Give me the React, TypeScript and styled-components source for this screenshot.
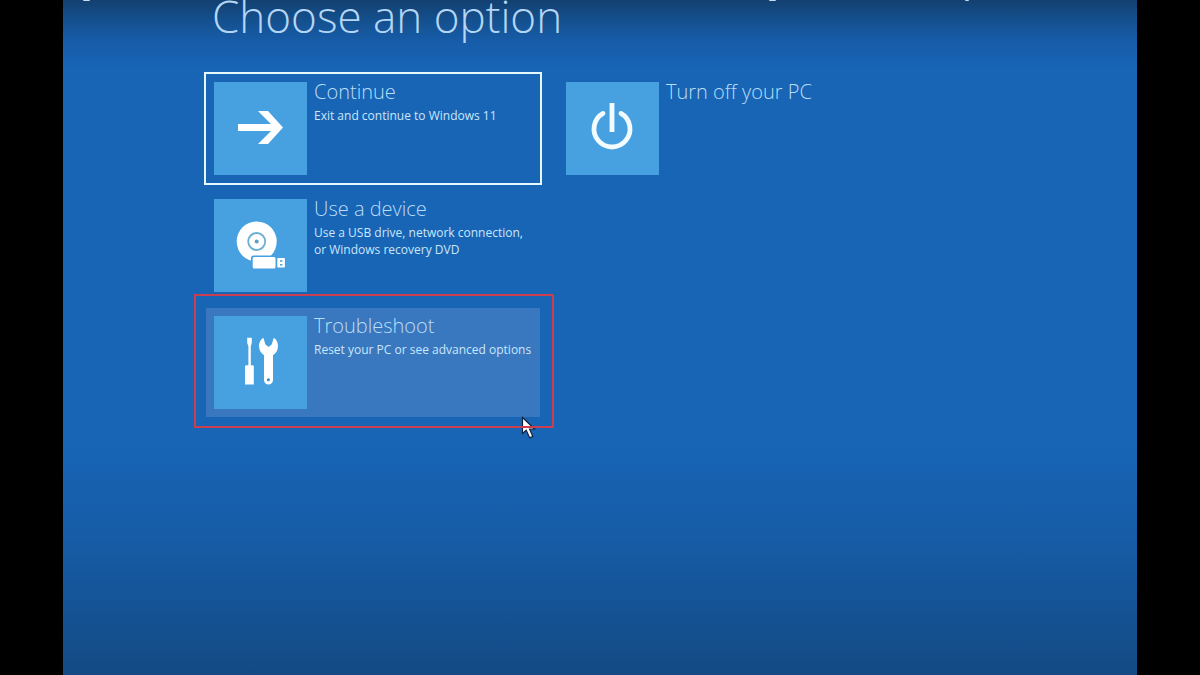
import React from "react";
import styled, { createGlobalStyle } from "styled-components";

const GlobalStyle = createGlobalStyle`
  * { box-sizing: border-box; }
  body {
    margin: 0;
    background: #000;
    font-family: "Open Sans", "Noto Sans", sans-serif;
  }
`;

const Screen = styled.main`
  position: relative;
  min-height: 100vh;
  margin: 0 63px;
  padding: 0 141px;
  overflow: hidden;
  background: linear-gradient(
    #134070 0%,
    #14508e 3%,
    #175ca8 6%,
    #1864b5 10%,
    #1864b5 66%,
    #165ca6 80%,
    #134a84 100%
  );
`;

const Caption = styled.div`
  position: absolute;
  top: 0;
  left: 20px;
  display: flex;
`;

const Descender = styled.span<{ $after: number; $width: number }>`
  width: ${(p) => p.$width}px;
  height: 1px;
  margin-right: ${(p) => p.$after}px;
  border-radius: 0 0 2px 2px;
  background: #c3dcf3;
`;

const Heading = styled.h1`
  margin: 0 0 40px;
  padding-left: 8px;
  color: #b4d6f5;
  font-size: 44px;
  font-weight: 300;
  line-height: 32px;
`;

const Options = styled.div`
  display: grid;
  grid-template-columns: repeat(2, 338px);
  gap: 4px 14px;
`;

const Cell = styled.div<{ $column?: number }>`
  position: relative;
  grid-column: ${(p) => p.$column ?? 1};
`;

const Tile = styled.button<{ $state?: "focused" | "hovered" }>`
  display: flex;
  align-items: flex-start;
  gap: 7px;
  width: 100%;
  padding: 8px;
  border: 2px solid ${(p) => (p.$state === "focused" ? "#e6f8ff" : "transparent")};
  background: ${(p) => (p.$state === "hovered" ? "#3977bf" : "transparent")};
  background-clip: padding-box;
  color: #b9def8;
  font-family: inherit;
  text-align: left;
  outline: none;
`;

const IconBox = styled.svg`
  flex: none;
  width: 93px;
  height: 93px;
  background: #47a1e1;
`;

const Label = styled.span`
  display: flex;
  flex-direction: column;
  white-space: nowrap;
`;

const Title = styled.span`
  font-size: 20px;
  font-weight: 300;
  line-height: 20px;
`;

const Description = styled.span`
  margin-top: 5px;
  color: #cbe7fb;
  font-size: 12px;
  line-height: 17px;
`;

const Highlight = styled.div`
  position: absolute;
  inset: -12px -12px -9px -10px;
  border: 2px solid #cb3e50;
  pointer-events: none;
`;

const Pointer = styled.svg`
  position: absolute;
  left: 317px;
  top: 110px;
  width: 16px;
  height: 24px;
  pointer-events: none;
`;

const ArrowIcon = () => (
  <IconBox viewBox="0 0 93 93" aria-hidden="true">
    <path d="M24 42H57L44 29H54L69 45.5L54 62H44L57 49H24Z" fill="#fff" />
  </IconBox>
);

const PowerIcon = () => (
  <IconBox viewBox="0 0 93 93" aria-hidden="true">
    <g fill="none" stroke="#f2fcff" strokeWidth="4.8">
      <path d="M46 21V50" />
      <path d="M37 31.4A18 18 0 1 0 55 31.4" strokeLinecap="round" />
    </g>
  </IconBox>
);

const DeviceIcon = () => (
  <IconBox viewBox="0 0 93 93" aria-hidden="true">
    <circle cx="42.7" cy="42.5" r="20" fill="#fff" />
    <circle cx="42.7" cy="42.5" r="8.5" fill="none" stroke="#6baed4" strokeWidth="1.8" />
    <circle cx="42.7" cy="42.5" r="2" fill="#5a9fc8" />
    <rect x="37" y="56.4" width="26" height="15" rx="2.5" fill="#47a1e1" />
    <rect x="38.7" y="58" width="22.8" height="11.4" rx="1.5" fill="#fff" />
    <rect x="63.3" y="59" width="7.6" height="9.6" rx="0.8" fill="#fff" />
    <path d="M66 61.2h2.4v1.6H66zM66 65h2.4v1.6H66z" fill="#47a1e1" />
  </IconBox>
);

const ToolsIcon = () => (
  <IconBox viewBox="0 0 93 93" aria-hidden="true">
    <path
      d="M33.2 21.7H37.8V27L36.8 30.2V49.3H38.6Q39.8 49.3 39.8 50.5V68.5H31V50.5Q31 49.3 32.2 49.3H34.4V30.2L33.2 27Z"
      fill="#fff"
    />
    <path
      d="M49.4 21.8C46.5 23.4 45 26.5 45 30C45 34.4 47.2 37.3 50 39.2V64A4.5 4.5 0 0 0 59 64V39.2C62 37.3 64 34.4 64 30C64 26.5 62.5 23.4 59.8 21.8L57.7 28.4L54.6 31L51.4 28.4Z"
      fill="#fff"
    />
    <circle cx="54.4" cy="63.7" r="1.5" fill="#3f86b8" />
  </IconBox>
);

export default function App() {
  return (
    <>
      <GlobalStyle />
      <Screen>
        <Caption aria-hidden="true">
          <Descender $width={7} $after={679} />
          <Descender $width={7} $after={189} />
          <Descender $width={4} $after={0} />
        </Caption>
        <Heading>Choose an option</Heading>
        <Options>
          <Cell>
            <Tile type="button" $state="focused">
              <ArrowIcon />
              <Label>
                <Title>Continue</Title>
                <Description>Exit and continue to Windows 11</Description>
              </Label>
            </Tile>
          </Cell>
          <Cell $column={2}>
            <Tile type="button">
              <PowerIcon />
              <Label>
                <Title>Turn off your PC</Title>
              </Label>
            </Tile>
          </Cell>
          <Cell>
            <Tile type="button">
              <DeviceIcon />
              <Label>
                <Title>Use a device</Title>
                <Description>
                  Use a USB drive, network connection,
                  <br />
                  or Windows recovery DVD
                </Description>
              </Label>
            </Tile>
          </Cell>
          <Cell>
            <Tile type="button" $state="hovered">
              <ToolsIcon />
              <Label>
                <Title>Troubleshoot</Title>
                <Description>Reset your PC or see advanced options</Description>
              </Label>
            </Tile>
            <Pointer viewBox="0 0 16 24" aria-hidden="true">
              <path
                d="M1.5 1.5V17.5L5.2 14.2L8.6 21.8L11.8 20.4L8.6 13H13.5Z"
                fill="#fff"
                stroke="#14233c"
                strokeWidth="1.2"
              />
            </Pointer>
            <Highlight />
          </Cell>
        </Options>
      </Screen>
    </>
  );
}
